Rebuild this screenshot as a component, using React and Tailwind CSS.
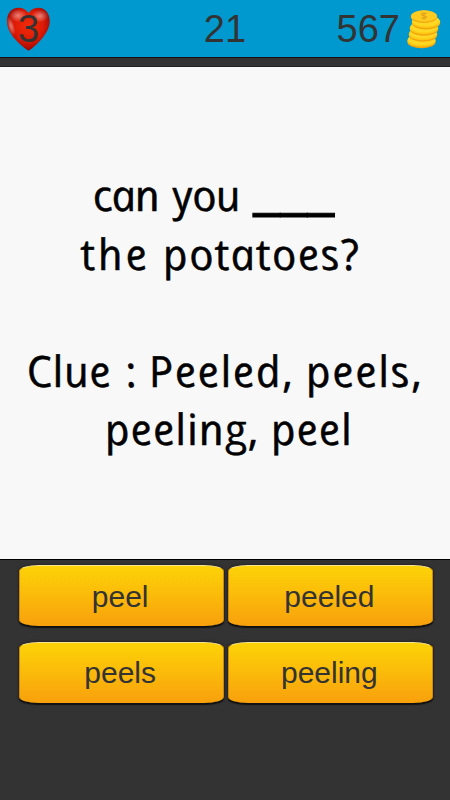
const lines = [
  {
    id: 'l1',
    words: [
      { text: 'can', box: 'ml-[92px] w-[80px] tracking-[-0.9px]' },
      { text: 'you', box: 'w-[81px] tracking-[-0.5px]' },
      { text: '___', blank: true, box: 'w-[83px]' },
    ],
  },
  {
    id: 'l2',
    words: [
      { text: 'the', box: 'ml-[80px] w-[82px] tracking-[2.8px]' },
      { text: 'potatoes?', box: 'w-[200px] tracking-[1.5px]' },
    ],
  },
  { id: 'l3', words: [] },
  {
    id: 'l4',
    words: [
      { text: 'Clue', box: 'ml-[26px] w-[99px] tracking-[0.5px]' },
      { text: ':', box: 'w-[23px]' },
      { text: 'Peeled,', box: 'w-[157px] tracking-[1.5px]' },
      { text: 'peels,', box: 'w-[120px] tracking-[1.6px]' },
    ],
  },
  {
    id: 'l5',
    words: [
      { text: 'peeling,', box: 'ml-[104px] w-[166px] tracking-[0.9px]' },
      { text: 'peel', box: 'w-[90px] tracking-[0.8px]' },
    ],
  },
]

const answers = ['peel', 'peeled', 'peels', 'peeling']

function Heart() {
  return (
    <svg className="absolute inset-0" width="44" height="44" viewBox="0 0 44 44">
      <defs>
        <radialGradient id="heartFill" cx="0.5" cy="0.42" r="0.62">
          <stop offset="0" stopColor="#f22c0a" />
          <stop offset="0.55" stopColor="#dc1a05" />
          <stop offset="1" stopColor="#8e0303" />
        </radialGradient>
        <radialGradient id="heartShine">
          <stop offset="0" stopColor="#fff" stopOpacity="0.45" />
          <stop offset="1" stopColor="#fff" stopOpacity="0" />
        </radialGradient>
      </defs>
      <path
        d="M22.500 6C20 2.500 16.500 .8 12.500 .8 5.500 .8 1 6.500 1 14c0 6.500 3 12 7.500 17.500 4.500 5.200 9.500 9.500 14 12.300 4.500-2.800 9.200-7.100 13.500-12.300C40.500 26 43.700 20.500 43.700 14 43.700 6.500 39 .8 32.500 .8 28.500 .8 25 2.500 22.500 6z"
        fill="url(#heartFill)"
      />
      <ellipse cx="12" cy="8.500" rx="9" ry="6.500" fill="url(#heartShine)" />
      <ellipse cx="34" cy="9" rx="8.500" ry="6.500" fill="url(#heartShine)" />
      <ellipse cx="5" cy="19" rx="3.500" ry="10" fill="url(#heartShine)" transform="rotate(-16 5 19)" />
    </svg>
  )
}

// bottom coin first, so that each one covers the coin under it
const coins = [
  { x: 14.5, y: 30.5 },
  { x: 16, y: 24 },
  { x: 17, y: 18 },
  { x: 19, y: 11.8 },
]

function Coins() {
  return (
    <svg width="34" height="40" viewBox="0 0 34 40">
      {coins.map((c) => (
        <g key={c.y}>
          <ellipse cx={c.x} cy={c.y + 2.5} rx="14" ry="6.200" fill="#f2a40e" />
          <ellipse cx={c.x} cy={c.y + 1.3} rx="14.200" ry="6" fill="#ffc812" />
          <ellipse cx={c.x} cy={c.y} rx="13.500" ry="5.500" fill="#ffd826" />
        </g>
      ))}
      <ellipse cx="17" cy="7.800" rx="13.200" ry="6.200" fill="#f3a70f" />
      <ellipse cx="17" cy="7" rx="12.900" ry="5.700" fill="#ffcb20" />
      <path d="M19.500 4.600c-2-1-5-.6-5 .9 0 1.500 5 1 5 2.600 0 1.500-3.500 1.700-5.300.6M17 3.400v7" fill="none" stroke="#e0a01d" strokeWidth="1.200" />
    </svg>
  )
}

function TopBar() {
  return (
    <header className="grid h-[57px] grid-cols-3 items-center bg-[#0099cf] text-[38px] leading-none text-[#333]">
      <div className="pl-[6px]">
        <div className="relative flex size-11 items-center justify-center">
          <Heart />
          <span className="relative pl-px">3</span>
        </div>
      </div>
      <span className="text-center">21</span>
      <div className="flex items-center justify-end gap-[7px] pr-[9px]">
        <span>567</span>
        <Coins />
      </div>
    </header>
  )
}

function Word({ word }) {
  if (word.blank) {
    return (
      <span className={`-mt-[11px] shrink-0 text-[62px] whitespace-nowrap not-italic [-webkit-text-stroke:1px_black] ${word.box}`}>
        {word.text}
      </span>
    )
  }
  return (
    <span className={`shrink-0 whitespace-nowrap ${word.box}`}>
      <span className="inline-block skew-x-12">{word.text}</span>
    </span>
  )
}

function Question() {
  return (
    <main className="h-[492px] bg-[#f8f8f8] pt-[99px] font-['Open_Sans',sans-serif] text-[43px] leading-[58.6px] font-medium text-black italic [-webkit-text-stroke:0.5px_black]">
      {lines.map((line) => (
        <p key={line.id} className="flex h-[58.6px]">
          {line.words.map((word) => (
            <Word key={word.text} word={word} />
          ))}
        </p>
      ))}
    </main>
  )
}

function Answer({ label }) {
  return (
    <button className="h-[61px] rounded-[20px/6px] border-x border-t border-x-[#c98a0d] border-t-[#fbe491] bg-linear-to-b from-[#fcd307] to-[#f8a00c] pt-px pr-[2px] text-[30px] leading-none text-[#333] shadow-[0_1.5px_1px_#111,0_0_3px_#1a1a1a]">
      {label}
    </button>
  )
}

export default function App() {
  return (
    <div className="h-[800px] w-[450px] overflow-hidden bg-[#333] font-['Liberation_Sans',sans-serif]">
      <TopBar />
      <div className="h-[10px] border-y border-t-[#111] border-b-[#222] bg-[#333]" />
      <Question />
      <div className="grid grid-cols-2 gap-x-[4px] gap-y-[15.5px] border-t border-black pt-[5px] pr-[17px] pl-[18.5px]">
        {answers.map((label) => (
          <Answer key={label} label={label} />
        ))}
      </div>
    </div>
  )
}
